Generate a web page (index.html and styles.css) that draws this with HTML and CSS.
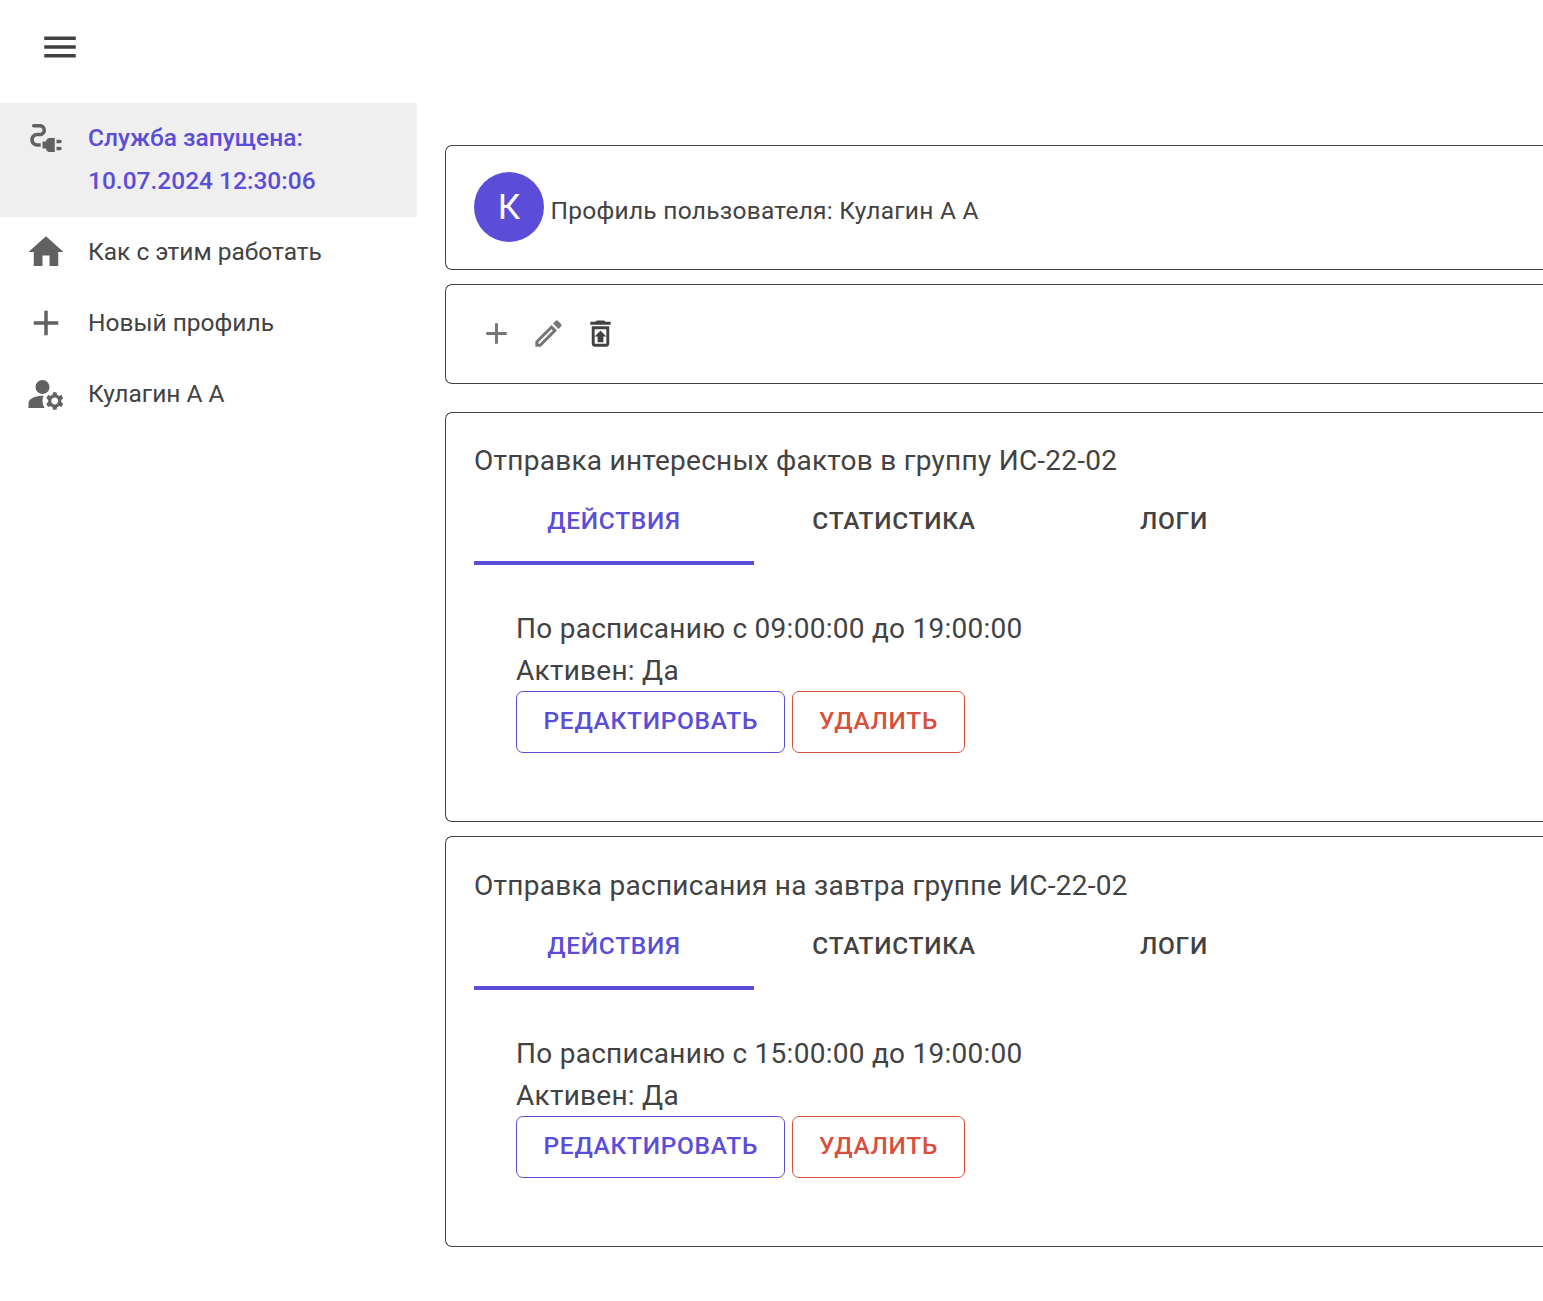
FILE: index.html
```html
<!DOCTYPE html>
<html lang="ru">
<head>
<meta charset="utf-8">
<title>Профиль пользователя</title>
<link rel="stylesheet" href="styles.css">
</head>
<body>
<header class="appbar">
  <svg class="icon" viewBox="0 0 24 24"><path d="M3 18h18v-2H3v2zm0-5h18v-2H3v2zm0-7v2h18V6H3z"/></svg>
</header>
<div class="layout">
  <nav class="nav">
    <a class="nav-item active">
      <svg class="icon" viewBox="0 0 24 24"><path d="M21,14c0-0.55-0.45-1-1-1h-2v2h2C20.55,15,21,14.55,21,14z M20,17h-2v2h2c0.55,0,1-0.45,1-1C21,17.45,20.55,17,20,17z M12,14h-2v4h2c0,1.1,0.9,2,2,2h3v-8h-3C12.9,12,12,12.9,12,14z M5,13c0-1.1,0.9-2,2-2h1.5c1.93,0,3.5-1.57,3.5-3.5S10.43,4,8.5,4H5C4.45,4,4,4.45,4,5c0,0.55,0.45,1,1,1h3.5C9.33,6,10,6.67,10,7.5S9.33,9,8.5,9H7c-2.21,0-4,1.79-4,4c0,2.21,1.79,4,4,4h2v-2H7C5.9,15,5,14.1,5,13z"/></svg>
      <span>Служба запущена:<br>10.07.2024 12:30:06</span>
    </a>
    <a class="nav-item">
      <svg class="icon" viewBox="0 0 24 24"><path d="M10 20v-6h4v6h5v-8h3L12 3 2 12h3v8z"/></svg>
      <span>Как с этим работать</span>
    </a>
    <a class="nav-item">
      <svg class="icon" viewBox="0 0 24 24"><path d="M19 13h-6v6h-2v-6H5v-2h6V5h2v6h6v2z"/></svg>
      <span>Новый профиль</span>
    </a>
    <a class="nav-item">
      <svg class="icon" viewBox="0 0 24 24"><circle cx="10" cy="8" r="4"/><path d="M10.67,13.02C10.45,13.01,10.23,13,10,13c-2.42,0-4.68,0.67-6.61,1.82C2.51,15.34,2,16.32,2,17.35V20h9.26C10.47,18.87,10,17.49,10,16C10,14.93,10.25,13.93,10.67,13.02z"/><path d="M20.75,16c0-0.22-0.03-0.42-0.06-0.63l1.14-1.01l-1-1.73l-1.45,0.49c-0.32-0.27-0.68-0.48-1.08-0.63L18,11h-2l-0.3,1.49c-0.4,0.15-0.76,0.36-1.08,0.63l-1.45-0.49l-1,1.73l1.14,1.01c-0.03,0.21-0.06,0.41-0.06,0.63s0.03,0.42,0.06,0.63l-1.14,1.01l1,1.73l1.45-0.49c0.32,0.27,0.68,0.48,1.08,0.63L16,21h2l0.3-1.49c0.4-0.15,0.76-0.36,1.08-0.63l1.45,0.49l1-1.73l-1.14-1.01C20.72,16.42,20.75,16.22,20.75,16z M17,18c-1.1,0-2-0.9-2-2s0.9-2,2-2s2,0.9,2,2S18.1,18,17,18z"/></svg>
      <span>Кулагин А А</span>
    </a>
  </nav>
  <main class="main">
    <section class="card profile">
      <div class="avatar">К</div>
      <span class="profile-name">Профиль пользователя: Кулагин А А</span>
    </section>
    <section class="card toolbar">
      <svg class="icon tool" viewBox="0 0 24 24"><path d="M19 13h-6v6h-2v-6H5v-2h6V5h2v6h6v2z"/></svg>
      <svg class="icon tool" viewBox="0 0 24 24"><path d="M14.06 9.02l.92.92L5.92 19H5v-.92l9.06-9.06M17.66 3c-.25 0-.51.1-.7.29l-1.83 1.83 3.75 3.75 1.83-1.83c.39-.39.39-1.02 0-1.41l-2.34-2.34c-.2-.2-.45-.29-.71-.29zm-3.6 3.19L3 17.25V21h3.75L17.81 9.94l-3.75-3.75z"/></svg>
      <svg class="icon tool dark" viewBox="0 0 24 24"><path d="M15.5 4l-1-1h-5l-1 1H5v2h14V4zM6 19c0 1.1.9 2 2 2h8c1.1 0 2-.9 2-2V7H6v12zM8 9h8v10H8V9zm2 9v-4H8l4-4 4 4h-2v4z"/></svg>
    </section>
    <section class="card task">
      <h2 class="task-title">Отправка интересных фактов в группу ИС-22-02</h2>
      <div class="tabs">
        <div class="tab selected">Действия</div>
        <div class="tab">Статистика</div>
        <div class="tab">Логи</div>
      </div>
      <div class="panel">
        <p>По расписанию с 09:00:00 до 19:00:00</p>
        <p>Активен: Да</p>
        <div class="actions">
          <button class="btn primary">Редактировать</button>
          <button class="btn error">Удалить</button>
        </div>
      </div>
    </section>
    <section class="card task">
      <h2 class="task-title">Отправка расписания на завтра группе ИС-22-02</h2>
      <div class="tabs">
        <div class="tab selected">Действия</div>
        <div class="tab">Статистика</div>
        <div class="tab">Логи</div>
      </div>
      <div class="panel">
        <p>По расписанию с 15:00:00 до 19:00:00</p>
        <p>Активен: Да</p>
        <div class="actions">
          <button class="btn primary">Редактировать</button>
          <button class="btn error">Удалить</button>
        </div>
      </div>
    </section>
  </main>
</div>
</body>
</html>
```
FILE: styles.css
```css
* { box-sizing: border-box; }
body {
  margin: 0;
  height: 1301px;
  background: #fff;
  color: #424242;
  font-family: Roboto, "Liberation Sans", sans-serif;
  font-size: 28px;
  line-height: 42px;
  letter-spacing: 0.00938em;
}
p, h2 { margin: 0; }
.icon { width: 42px; height: 42px; fill: currentColor; flex: none; display: block; }
.appbar { height: 103px; padding: 26px 0 0 39px; }
.layout { display: flex; align-items: flex-start; }
.nav { width: 417px; flex: none; font-size: 24.5px; line-height: 42.875px; letter-spacing: 0; }
.nav-item { display: flex; align-items: flex-start; gap: 21px; padding: 14px 28px 14px 25px; }
.nav-item .icon { color: #616161; }
.nav-item.active {
  background: #efefef;
  color: #5c4dd9;
  font-weight: 500;
  border-radius: 0 2px 2px 0;
}
.main { flex: 1; min-width: 0; margin-left: 28px; padding-top: 42px; }
.card {
  border: 1px solid #424242;
  border-right: 0;
  border-radius: 7px 0 0 7px;
  padding: 0 0 0 28px;
}
.profile { height: 125px; display: flex; align-items: flex-start; gap: 6.5px; padding-top: 26px; }
.avatar {
  width: 70px; height: 70px; border-radius: 50%;
  background: #5c4dd9; color: #fff;
  font-size: 35px; line-height: 71px; text-align: center; letter-spacing: 0;
}
.profile-name { font-size: 24.5px; line-height: 35px; letter-spacing: 0.01071em; margin-top: 21px; }
.toolbar { height: 100px; margin-top: 14px; display: flex; align-items: center; gap: 17px; padding: 0 0 2px 33px; }
.icon.tool { width: 35px; height: 35px; color: #757575; }
.icon.tool.dark { color: #424242; }
.task { height: 410px; margin-top: 28px; padding-top: 27px; }
.task + .task { margin-top: 14px; height: 411px; padding-top: 28px; }
.task-title { font-size: 28px; font-weight: 400; line-height: 42px; }
.tabs { display: flex; height: 83px; }
.tab {
  width: 280px; text-align: center; text-transform: uppercase;
  font-size: 24.5px; font-weight: 500; line-height: 43px; letter-spacing: 0.02857em;
  padding-top: 17px; border-bottom: 4px solid transparent;
}
.tab.selected { color: #5c4dd9; border-color: #5c4dd9; }
.panel { padding: 43px 42px 42px; }
.actions { display: flex; gap: 7px; margin-top: -1px; }
.btn {
  height: 62px; padding: 0 25.5px 3px 26.5px; border: 1px solid; border-radius: 7px; background: none;
  font-family: inherit; font-size: 24.5px; font-weight: 500; line-height: 43px;
  letter-spacing: 0.02857em; text-transform: uppercase;
}
.btn.primary { color: #5c4dd9; }
.btn.error { color: #d94f3d; }
```
